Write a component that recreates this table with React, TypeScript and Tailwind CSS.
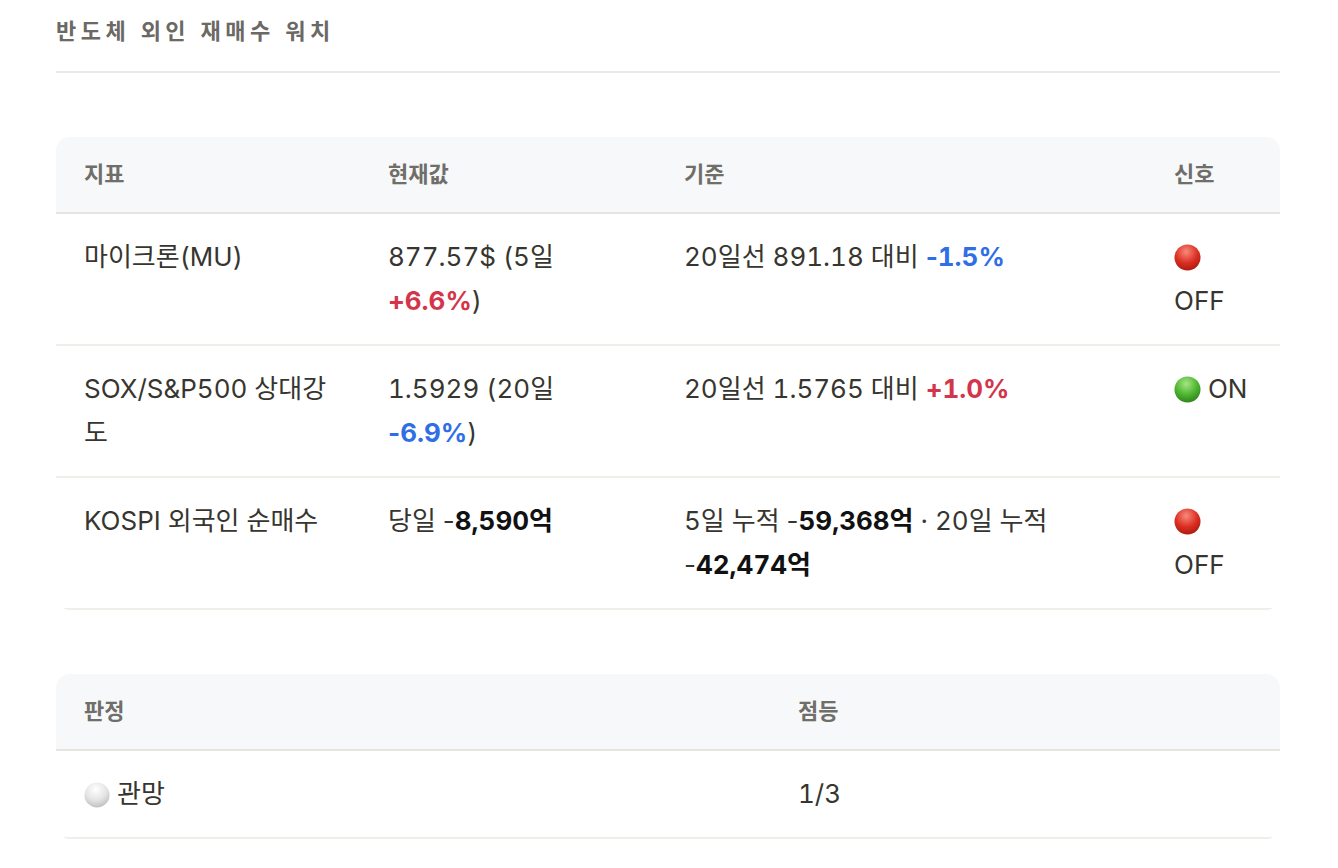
import React from "react";

type Signal = "on" | "off" | "neutral";

const dotColors: Record<Signal, [string, string, string]> = {
  off: ["#f88a7c", "#dc2f22", "#a3180e"],
  on: ["#a6e585", "#4db52f", "#2a7a1b"],
  neutral: ["#ffffff", "#e4e4e4", "#b9b9b9"],
};

function Dot({ kind, size = 27 }: { kind: Signal; size?: number }) {
  const [hi, mid, lo] = dotColors[kind];
  return (
    <svg
      width={size}
      height={size}
      viewBox="0 0 28 28"
      className="inline-block align-[-5px]"
    >
      <defs>
        <radialGradient id={`dot-${kind}`} cx="45%" cy="28%" r="78%">
          <stop offset="0%" stopColor={hi} />
          <stop offset="55%" stopColor={mid} />
          <stop offset="100%" stopColor={lo} />
        </radialGradient>
      </defs>
      <circle cx="14" cy="14" r="13.5" fill={`url(#dot-${kind})`} />
    </svg>
  );
}

// plain hyphen, kept out of tabular figures so it stays narrow
const Minus = () => <span className="normal-nums">-</span>;

const Up = ({ children }: { children: React.ReactNode }) => (
  <span className="font-bold text-[#d3354b]">{children}</span>
);
const Down = ({ children }: { children: React.ReactNode }) => (
  <span className="font-bold text-[#2f6ee6]">
    <Minus />
    {children}
  </span>
);
const Strong = ({ children }: { children: React.ReactNode }) => (
  <span className="font-bold text-[#111111]">{children}</span>
);

const rows = [
  {
    name: "마이크론(MU)",
    value: (
      <>
        877.57$ (5일 <Up>+6.6%</Up>)
      </>
    ),
    basis: (
      <>
        20일선 891.18 대비 <Down>1.5%</Down>
      </>
    ),
    signal: "off" as Signal,
  },
  {
    name: "SOX/S&P500 상대강도",
    value: (
      <>
        1.5929 (20일 <Down>6.9%</Down>)
      </>
    ),
    basis: (
      <>
        20일선 1.5765 대비 <Up>+1.0%</Up>
      </>
    ),
    signal: "on" as Signal,
  },
  {
    name: "KOSPI 외국인 순매수",
    value: (
      <>
        당일 <Minus />
        <Strong>8,590억</Strong>
      </>
    ),
    basis: (
      <>
        5일 누적 <Minus />
        <Strong>59,368억</Strong> · 20일 누적 <Minus />
        <Strong>42,474억</Strong>
      </>
    ),
    signal: "off" as Signal,
  },
];

const th =
  "px-[28px] py-[22px] text-left text-[22px] leading-[31px] font-bold text-[#6f6e69]";
const td = "px-[28px] py-[21px] align-top text-[26px] leading-[44px]";

export default function App() {
  return (
    <div
      className="min-h-screen bg-white text-[#37352f] tabular-nums"
      style={{ fontFamily: 'Inter, "Noto Sans CJK KR", sans-serif' }}
    >
      <div className="ml-14 w-[1224px]">
        <h1 className="pt-[15px] pb-[24px] border-b-2 border-[#ebe9e5] text-[22px] leading-[32px] font-bold tracking-[4.5px] text-[#6b6964]">
          반도체 외인 재매수 워치
        </h1>

        <div className="mt-16 rounded-[14px] overflow-hidden">
          <table className="w-full table-fixed border-collapse">
            <colgroup>
              <col className="w-[304px]" />
              <col className="w-[296px]" />
              <col className="w-[490px]" />
              <col className="w-[134px]" />
            </colgroup>
            <thead>
              <tr className="bg-[#f7f8fa] border-b-2 border-[#e6e4df]">
                <th className={th}>지표</th>
                <th className={th}>현재값</th>
                <th className={th}>기준</th>
                <th className={th}>신호</th>
              </tr>
            </thead>
            <tbody>
              {rows.map((r) => (
                <tr key={r.name} className="border-b-2 border-[#efeee9]">
                  <td className={td}>{r.name}</td>
                  <td className={td}>{r.value}</td>
                  <td className={td}>{r.basis}</td>
                  <td className={td}>
                    <Dot kind={r.signal} /> {r.signal === "on" ? "ON" : "OFF"}
                  </td>
                </tr>
              ))}
            </tbody>
          </table>
        </div>

        <div className="mt-16 rounded-[14px] overflow-hidden">
          <table className="w-full table-fixed border-collapse">
            <colgroup>
              <col className="w-[714px]" />
              <col className="w-[510px]" />
            </colgroup>
            <thead>
              <tr className="bg-[#f7f8fa] border-b-2 border-[#e6e4df]">
                <th className={th}>판정</th>
                <th className={th}>점등</th>
              </tr>
            </thead>
            <tbody>
              <tr className="border-b-2 border-[#efeee9]">
                <td className={td}>
                  <Dot kind="neutral" size={26} /> 관망
                </td>
                <td className={td}>1/3</td>
              </tr>
            </tbody>
          </table>
        </div>
      </div>
    </div>
  );
}
